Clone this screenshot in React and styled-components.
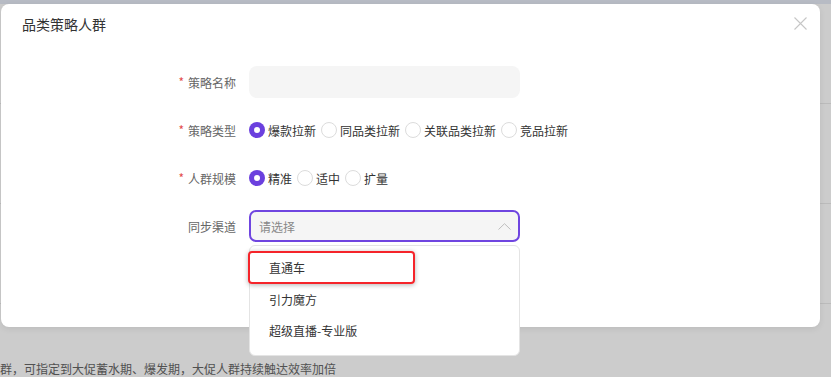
import React from "react";
import styled, { createGlobalStyle } from "styled-components";

const Global = createGlobalStyle`
  html, body { margin: 0; padding: 0; }
  body {
    width: 831px; height: 377px; overflow: hidden;
    font-family: "Noto Sans CJK SC", "Noto Sans", sans-serif;
    background: #fff;
  }
`;

const Page = styled.div`
  position: relative;
  width: 831px;
  height: 377px;
  overflow: hidden;
  background: #ffffff;
`;

const TopBar = styled.div`
  height: 4px;
  background: #e5eaf6;
`;

const BgRows = styled.div`
  display: flex;
  flex-direction: column;
`;

const BgRow = styled.div`
  height: 100px;
  border-bottom: 1px solid #eaeaea;
  box-sizing: border-box;
`;

const BgText = styled.div`
  position: absolute;
  left: 0;
  top: 360px;
  font-size: 12px;
  line-height: 18px;
  color: #666;
  white-space: nowrap;
`;

const Mask = styled.div`
  position: absolute;
  inset: 0;
  background: rgba(0, 0, 0, 0.2);
`;

const Modal = styled.div`
  position: absolute;
  left: 1px;
  top: 4px;
  width: 819px;
  height: 323px;
  background: #fff;
  border-radius: 8px;
  box-shadow: 0 2px 6px rgba(0, 0, 0, 0.08);
  display: flex;
  flex-direction: column;
`;

const Header = styled.div`
  height: 40px;
  display: flex;
  align-items: center;
  justify-content: space-between;
  padding: 0 13px 0 21px;
`;

const Title = styled.div`
  font-size: 14px;
  color: #333;
  line-height: 20px;
`;

const Close = styled.button`
  border: 0;
  background: none;
  padding: 0;
  width: 14px;
  height: 14px;
  display: flex;
  align-items: center;
  justify-content: center;
  margin-top: -2px;
`;

const Form = styled.div`
  display: grid;
  grid-template-columns: 86px 271px;
  column-gap: 13px;
  row-gap: 16px;
  padding: 22px 0 0 149px;
  grid-auto-rows: 32px;
`;

const Label = styled.div`
  display: flex;
  align-items: center;
  justify-content: flex-end;
  font-size: 12px;
  color: #666;
  white-space: nowrap;
`;

const Star = styled.span`
  color: #e34d4d;
  font-size: 12px;
  margin-right: 4px;
  position: relative;
  top: -1px;
`;

const Input = styled.div`
  background: #f5f5f5;
  border-radius: 8px;
  height: 32px;
`;

const RadioGroup = styled.div`
  display: flex;
  align-items: center;
`;

const RadioItem = styled.label`
  display: flex;
  align-items: center;
  margin-right: 5px;
  font-size: 12px;
  color: #333;
  white-space: nowrap;
`;

const Dot = styled.span`
  width: 16px;
  height: 16px;
  border-radius: 50%;
  box-sizing: border-box;
  margin-right: 3px;
  display: flex;
  align-items: center;
  justify-content: center;
  background: ${(p) => (p.$checked ? "#6b40de" : "#fff")};
  border: ${(p) => (p.$checked ? "none" : "1.5px solid #dcdcdc")};
  &::after {
    content: "";
    width: 6px;
    height: 6px;
    border-radius: 50%;
    background: #fff;
    display: ${(p) => (p.$checked ? "block" : "none")};
  }
`;

const SelectWrap = styled.div`
  position: relative;
`;

const SelectBox = styled.div`
  height: 32px;
  box-sizing: border-box;
  border: 2px solid #6f45e0;
  border-radius: 7px;
  background: #f5f5f5;
  display: flex;
  align-items: center;
  justify-content: space-between;
  padding: 0 7px 0 8px;
  font-size: 12px;
  color: #888;
`;

const Menu = styled.div`
  position: absolute;
  left: 0;
  top: 35px;
  width: 271px;
  box-sizing: border-box;
  background: #fff;
  border: 1px solid #e4e4e4;
  border-radius: 6px;
  padding: 6px 0 8px;
  z-index: 2;
`;

const MenuItem = styled.div`
  position: relative;
  height: 31.5px;
  display: flex;
  align-items: center;
  padding-left: 19px;
  font-size: 12px;
  color: #333;
`;

const Highlight = styled.div`
  position: absolute;
  left: -2px;
  top: -1px;
  width: 167px;
  height: 33px;
  box-sizing: border-box;
  border: 2px solid #f5242a;
  border-radius: 4px;
  box-shadow: 0 1px 5px rgba(0, 0, 0, 0.3);
`;

const Radios = ({ items, checked }) => (
  <RadioGroup>
    {items.map((t, i) => (
      <RadioItem key={t}>
        <Dot $checked={i === checked} />
        {t}
      </RadioItem>
    ))}
  </RadioGroup>
);

export default function App() {
  return (
    <>
      <Global />
      <Page>
        <TopBar />
        <BgRows>
          <BgRow />
          <BgRow />
          <BgRow />
        </BgRows>
        <BgText>群，可指定到大促蓄水期、爆发期，大促人群持续触达效率加倍</BgText>
        <Mask />
        <Modal>
          <Header>
            <Title>品类策略人群</Title>
            <Close aria-label="close">
              <svg width="13" height="13" viewBox="0 0 13 13">
                <path d="M0.5 0.5 L12.5 12.5 M12.5 0.5 L0.5 12.5" stroke="#c6c6c6" strokeWidth="1.1" fill="none" />
              </svg>
            </Close>
          </Header>
          <Form>
            <Label><Star>*</Star>策略名称</Label>
            <Input />
            <Label><Star>*</Star>策略类型</Label>
            <Radios items={["爆款拉新", "同品类拉新", "关联品类拉新", "竞品拉新"]} checked={0} />
            <Label><Star>*</Star>人群规模</Label>
            <Radios items={["精准", "适中", "扩量"]} checked={0} />
            <Label>同步渠道</Label>
            <SelectWrap>
              <SelectBox>
                请选择
                <svg width="13" height="7" viewBox="0 0 13 7">
                  <path d="M0.5 6.5 L6.5 0.7 L12.5 6.5" stroke="#bdbdbd" strokeWidth="1" fill="none" />
                </svg>
              </SelectBox>
              <Menu>
                <MenuItem>
                  直通车
                  <Highlight />
                </MenuItem>
                <MenuItem>引力魔方</MenuItem>
                <MenuItem>超级直播-专业版</MenuItem>
              </Menu>
            </SelectWrap>
          </Form>
        </Modal>
      </Page>
    </>
  );
}
